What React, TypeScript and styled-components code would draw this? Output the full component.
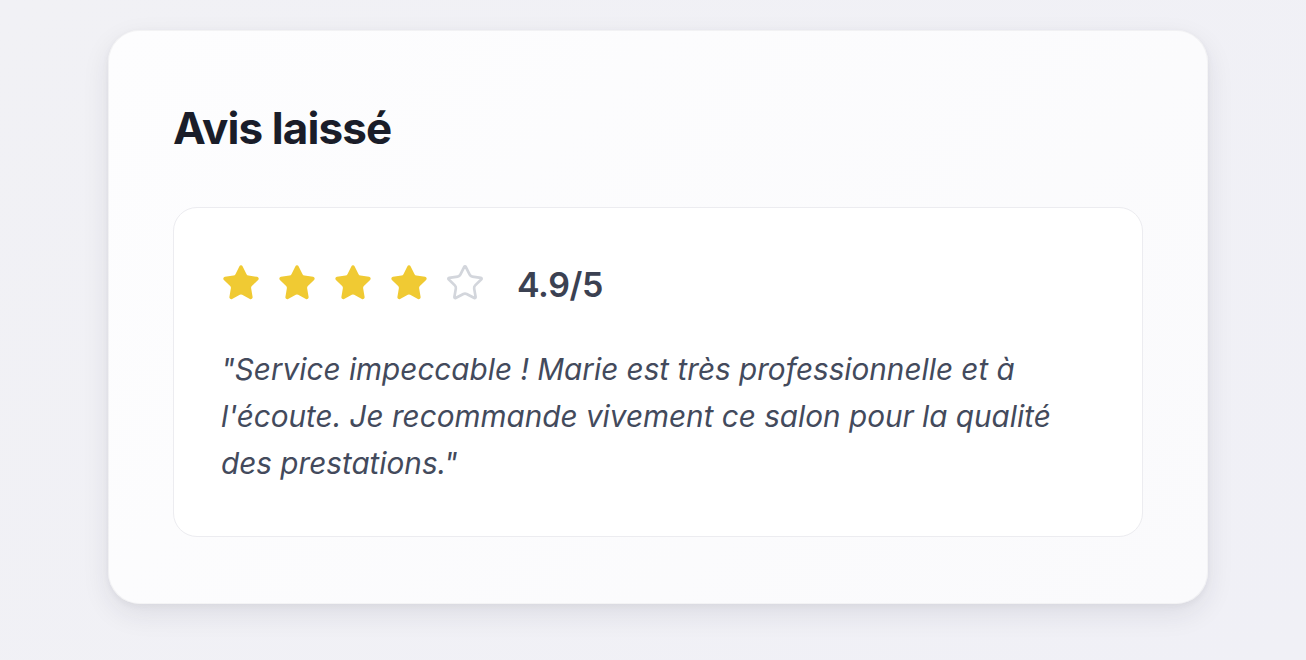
import React from "react";
import styled, { createGlobalStyle } from "styled-components";
import { Star } from "lucide-react";

const Global = createGlobalStyle`
  html, body {
    margin: 0;
    padding: 0;
    background: linear-gradient(135deg, #f1f1f5 0%, #f0f0f6 100%);
    font-family: Inter, "Noto Sans", sans-serif;
  }
  body { min-height: 660px; }
`;

const Page = styled.div`
  display: flex;
  align-items: flex-start;
  padding: 30px 98px 0 108px;
  min-height: 660px;
  box-sizing: border-box;
`;

const Card = styled.section`
  width: 1100px;
  box-sizing: border-box;
  padding: 64px 64px 66px 64px;
  border-radius: 32px;
  border: 1px solid rgba(0, 0, 0, 0.035);
  background: linear-gradient(135deg, #fdfdfe 0%, #fafafc 100%);
  box-shadow: 0 10px 28px rgba(30, 35, 60, 0.09), 0 2px 6px rgba(30, 35, 60, 0.05);
`;

const Title = styled.h2`
  margin: 0 0 46px 0;
  font-size: 44px;
  line-height: 66px;
  font-weight: 700;
  letter-spacing: -0.9px;
  color: #1a1d29;
`;

const ReviewBox = styled.div`
  background: #ffffff;
  border: 1px solid #ececf0;
  border-radius: 24px;
  padding: 52px 47px 49px 47px;
`;

const RatingRow = styled.div`
  display: flex;
  align-items: center;
  gap: 32px;
  height: 45px;
`;

const Stars = styled.div`
  display: flex;
  align-items: center;
  gap: 16px;
`;

const Score = styled.span`
  font-size: 34px;
  font-weight: 600;
  color: #3b4152;
  letter-spacing: -0.4px;
  line-height: 45px;
  padding-top: 3px;
`;

const Quote = styled.p`
  margin: 41px 0 0 0;
  font-size: 29.7px;
  line-height: 47px;
  font-style: italic;
  color: #434a5c;
  max-width: 873px;
`;

const StarIcon = ({ filled }: { filled: boolean }) => (
  <Star
    size={40}
    strokeWidth={filled ? 1.2 : 1.6}
    color={filled ? "#f0ca33" : "#d3d6dc"}
    fill={filled ? "#f0ca33" : "none"}
    strokeLinejoin="round"
  />
);

export default function App() {
  const rating = 4;
  return (
    <>
      <Global />
      <Page>
        <Card>
          <Title>Avis laissé</Title>
          <ReviewBox>
            <RatingRow>
              <Stars>
                {[0, 1, 2, 3, 4].map((i) => (
                  <StarIcon key={i} filled={i < rating} />
                ))}
              </Stars>
              <Score>4.9/5</Score>
            </RatingRow>
            <Quote>
              "Service impeccable ! Marie est très professionnelle et à l'écoute. Je recommande vivement ce salon pour la qualité des prestations."
            </Quote>
          </ReviewBox>
        </Card>
      </Page>
    </>
  );
}
